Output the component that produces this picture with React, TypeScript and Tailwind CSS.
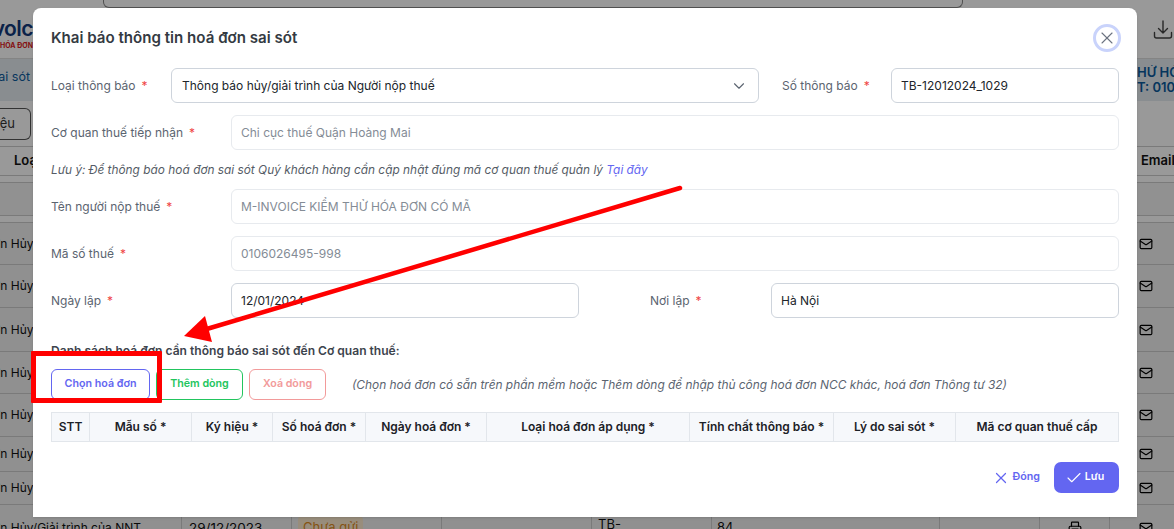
import { ChevronDown, X, Check, Mail, Printer } from 'lucide-react'

const rowHeights = [42, 43, 44, 42, 43, 35, 33, 33]

const columns = 'grid grid-cols-[181px_110px_150px_150px_120px_228px_100px_70px_65px]'

const Req = () => <span className="text-[#ef4444] ml-[6px]">*</span>

const Label = ({ children, className }: { children: string; className: string }) => (
    <label className={`shrink-0 text-[12px] text-[#5b6470] ${className}`}>
        {children}
        <Req />
    </label>
)

const Field = ({ value, disabled, className }: { value: string; disabled?: boolean; className?: string }) => (
    <div
        className={`h-[35px] flex items-center px-[9px] rounded-[6px] border text-[12px] ${
            disabled ? 'border-[#e7eaee] text-[#848c96]' : 'border-[#ced4dc] text-[#20252b]'
        } ${className ?? 'flex-1'}`}
    >
        {value}
    </div>
)

const headers = [
    { label: 'STT', w: 'w-[38px]' },
    { label: 'Mẫu số *', w: 'w-[102px]' },
    { label: 'Ký hiệu *', w: 'w-[81px]' },
    { label: 'Số hoá đơn *', w: 'w-[93px]' },
    { label: 'Ngày hoá đơn *', w: 'w-[121px]' },
    { label: 'Loại hoá đơn áp dụng *', w: 'w-[203px]' },
    { label: 'Tính chất thông báo *', w: 'w-[144px]' },
    { label: 'Lý do sai sót *', w: 'w-[122px]' },
    { label: 'Mã cơ quan thuế cấp', w: 'w-[163px]' },
]

const Background = () => (
    <div className="w-[1174px] bg-white text-[#111] text-[14px]">
        {/* top bar */}
        <div className="h-[59px] flex items-start border-b border-[#ddd]">
            <div className="w-[33px] h-full overflow-hidden flex flex-col items-end pt-[16px]">
                <span className="text-[21px] leading-[26px] font-semibold text-[#123a7a] tracking-tight">volc</span>
                <span className="text-[7px] leading-[7px] font-bold text-[#d22] whitespace-nowrap">HÓA ĐƠN</span>
            </div>
            <div className="ml-[70px] w-[860px] h-[8px] rounded-b-[6px] border-x border-b border-[#888]" />
            <svg className="ml-[190px] mt-[20px]" width="20" height="20" viewBox="0 0 20 20" fill="none" stroke="#444" strokeWidth="1.4" strokeLinecap="round" strokeLinejoin="round">
                <path d="M10 1v12M5.5 8.5 10 13l4.5-4.5M1.5 12.5v3.5a2 2 0 0 0 2 2h13a2 2 0 0 0 2-2v-3.5" />
            </svg>
        </div>
        {/* title band */}
        <div className="h-[42px] bg-[#e5ecf1] flex items-center justify-between">
            <div className="w-[33px] pr-[3px] pb-[5px] overflow-hidden flex justify-end text-[12.5px] text-[#0a5a9c] whitespace-nowrap">sai sót</div>
            <div className="w-[37px] overflow-hidden text-[13px] leading-[15px] font-semibold text-[#0a5a9c] whitespace-nowrap">
                <div>HỬ HÓA</div>
                <div>T: 0106</div>
            </div>
        </div>
        {/* toolbar */}
        <div className="h-[45px] flex items-center">
            <div className="w-[31px] h-[32px] rounded-r-[6px] border border-l-0 border-[#555] flex items-center justify-end pr-[15px] text-[13px] text-[#333]">
                iệu
            </div>
        </div>
        {/* table head */}
        <div className="h-[30px] border-y border-[#ccc] flex items-center justify-between font-semibold text-[13px]">
            <span className="pl-[14px] w-[33px] overflow-hidden whitespace-nowrap">Loại</span>
            <span className="w-[33px] whitespace-nowrap">Email</span>
        </div>
        <div className="h-[7px] border-b border-[#ccc]" />
        <div className="h-[33px] bg-[#f2f2f2] border-b border-[#ccc]" />
        <div className="h-[7px] border-b border-[#ccc]" />
        {rowHeights.map((h, i) => (
            <div key={i} style={{ height: h }} className={`${columns} items-center border-b border-[#ccc] bg-[#f0f0f0] ${i === 7 ? 'pt-[10px]' : ''}`}>
                <div className="flex justify-end overflow-hidden whitespace-nowrap pr-[40px] text-[12px]">Hóa đơn Hủy/Giải trình của NNT</div>
                <div className="h-full flex items-center border-l border-[#ccc] pl-[7px] text-[13.5px]">{i === 7 ? '29/12/2023' : ''}</div>
                <div className="h-full flex items-center border-l border-[#ccc] pl-[6px]">
                    {i === 7 && <span className="px-[5px] h-[26px] flex items-center rounded-[5px] bg-[#fdeccf] text-[13px] text-[#e08a1e]">Chưa gửi</span>}
                </div>
                <div className="h-full border-l border-[#ccc]" />
                <div className="h-full border-l border-[#ccc] pl-[6px] text-[13px]">{i === 7 ? 'TB-' : ''}</div>
                <div className="h-full flex items-center border-l border-[#ccc] pl-[5px] text-[13px]">{i === 7 ? '84' : ''}</div>
                <div className="h-full border-l border-[#ccc]" />
                <div className="h-full flex items-center justify-center border-l border-[#ccc]">
                    {i === 7 && <Printer size={14} strokeWidth={2} className="text-black" />}
                </div>
                <div className="h-full flex items-center border-l border-[#ccc] pl-[29px]">
                    <Mail size={14} strokeWidth={2} className="text-black" />
                </div>
            </div>
        ))}
    </div>
)

const Modal = () => (
    <div className="absolute left-[33px] top-[8px] w-[1104px] h-[509px] bg-white rounded-t-[8px] px-[18px] font-['Inter',sans-serif] shadow-sm">
        <div className="h-[60px] flex items-center justify-between">
            <h2 className="text-[15.1px] font-semibold text-[#343a42]">Khai báo thông tin hoá đơn sai sót</h2>
            <button className="w-[28px] h-[28px] -mr-[2px] rounded-full border-[3px] border-[#c9d3fb] flex items-center justify-center text-[#6b7280]">
                <X size={20} strokeWidth={1.3} />
            </button>
        </div>

        <div className="flex flex-col gap-[12px]">
            <div className="flex items-center">
                <Label className="w-[120px]">Loại thông báo</Label>
                <div className="w-[588px] h-[35px] flex items-center justify-between px-[10px] rounded-[6px] border border-[#ced4dc] text-[12px] text-[#20252b]">
                    Thông báo hủy/giải trình của Người nộp thuế
                    <ChevronDown size={18} strokeWidth={1.5} className="text-[#5b6470]" />
                </div>
                <Label className="ml-[23px] w-[109px]">Số thông báo</Label>
                <Field value="TB-12012024_1029" />
            </div>
            <div className="flex items-center">
                <Label className="w-[180px]">Cơ quan thuế tiếp nhận</Label>
                <Field value="Chi cục thuế Quận Hoàng Mai" disabled />
            </div>
        </div>

        <p className="h-[39px] pt-[2px] flex items-center text-[11.85px] italic text-[#555c66]">
            Lưu ý: Để thông báo hoá đơn sai sót Quý khách hàng cần cập nhật đúng mã cơ quan thuế quản lý&nbsp;
            <a className="text-[#6366f1]">Tại đây</a>
        </p>

        <div className="flex flex-col gap-[12px]">
            <div className="flex items-center">
                <Label className="w-[180px]">Tên người nộp thuế</Label>
                <Field value="M-INVOICE KIỂM THỬ HÓA ĐƠN CÓ MÃ" disabled />
            </div>
            <div className="flex items-center">
                <Label className="w-[180px]">Mã số thuế</Label>
                <Field value="0106026495-998" disabled />
            </div>
            <div className="flex items-center">
                <Label className="w-[180px]">Ngày lập</Label>
                <Field value="12/01/2024" className="w-[348px]" />
                <Label className="ml-[71px] w-[121px]">Nơi lập</Label>
                <Field value="Hà Nội" />
            </div>
        </div>

        <h3 className="mt-[25px] h-[16px] leading-[16px] text-[12.07px] font-semibold text-[#3d444d]">
            Danh sách hoá đơn cần thông báo sai sót đến Cơ quan thuế:
        </h3>

        <div className="mt-[10px] flex items-center">
            <button className="w-[99px] h-[31px] rounded-[6px] border border-[#6366f1] text-[10.7px] font-semibold text-[#6366f1]">Chọn hoá đơn</button>
            <button className="ml-[6px] w-[87px] h-[31px] rounded-[6px] border border-[#22c55e] text-[10.7px] font-semibold text-[#22c55e]">Thêm dòng</button>
            <button className="ml-[6px] w-[77px] h-[31px] rounded-[6px] border border-[#f29a9a] text-[10.7px] font-semibold text-[#f29a9a]">Xoá dòng</button>
            <span className="ml-[26px] text-[11.9px] italic text-[#5b6470]">
                (Chọn hoá đơn có sẵn trên phần mềm hoặc Thêm dòng để nhập thủ công hoá đơn NCC khác, hoá đơn Thông tư 32)
            </span>
        </div>

        <table className="mt-[12px] w-[1068px] table-fixed border-collapse">
            <thead>
                <tr className="h-[29px] bg-[#f6f8fb]">
                    {headers.map((h) => (
                        <th key={h.label} className={`${h.w} border border-[#e2e6eb] text-[12px] font-semibold text-[#1c2127] text-center p-0`}>
                            {h.label}
                        </th>
                    ))}
                </tr>
            </thead>
        </table>

        <div className="mt-[20px] flex items-center justify-end">
            <button className="flex items-center gap-[3px] text-[10.7px] font-semibold text-[#6366f1]">
                <X size={18} strokeWidth={1.6} />
                Đóng
            </button>
            <button className="ml-[14px] w-[65px] h-[31px] pr-[4px] rounded-[7px] bg-[#6366f1] flex items-center justify-center gap-[2px] text-[10.7px] font-semibold text-white">
                <Check size={18} strokeWidth={1.5} />
                Lưu
            </button>
        </div>
    </div>
)

export default function App() {
    return (
        <div className="relative w-[1174px] h-[529px] overflow-hidden font-['Inter',sans-serif]">
            <Background />
            <div className="absolute inset-0 bg-black/40" />
            <Modal />

            {/* annotation drawn on top of the screenshot */}
            <svg className="absolute inset-0 pointer-events-none" width="1174" height="529" viewBox="0 0 1174 529">
                <line x1="680" y1="188" x2="200" y2="331" stroke="#ff0000" strokeWidth="4.5" strokeLinecap="round" />
                <polygon points="184,336 205,316 212,342" fill="#ff0000" />
            </svg>
            <div className="absolute left-[31px] top-[351px] w-[131px] h-[52px] border-[5px] border-[#ff0000] rounded-[1px] pointer-events-none" />
        </div>
    )
}
